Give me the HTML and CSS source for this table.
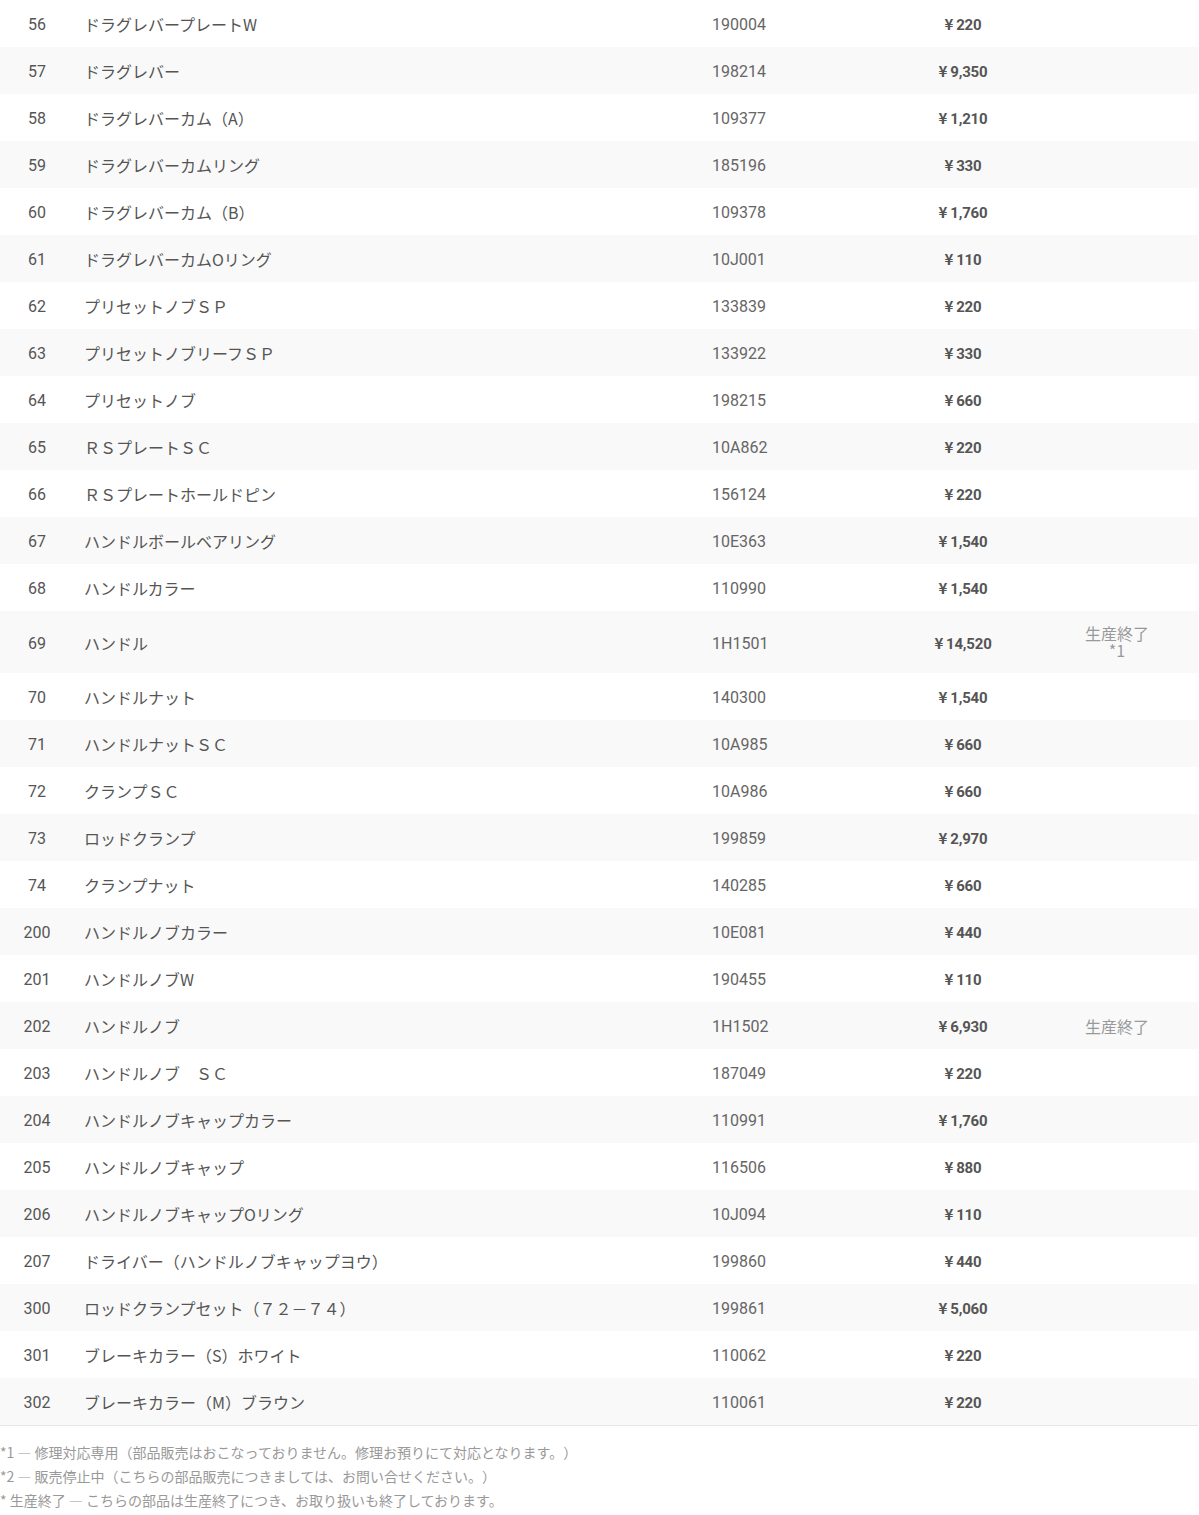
FILE: index.html
```html
<!DOCTYPE html>
<html lang="ja">
<head>
<meta charset="utf-8">
<title>Parts</title>
<link rel="stylesheet" href="styles.css">
</head>
<body>
<table class="parts">
<colgroup><col class="c-no"><col class="c-name"><col class="c-code"><col class="c-price"><col class="c-note"></colgroup>
<tbody>
<tr><td class="no">56</td><td class="name">ドラグレバープレートW</td><td class="code">190004</td><td class="price"><span class="yen">¥</span>220</td><td class="note"></td></tr>
<tr><td class="no">57</td><td class="name">ドラグレバー</td><td class="code">198214</td><td class="price"><span class="yen">¥</span>9,350</td><td class="note"></td></tr>
<tr><td class="no">58</td><td class="name">ドラグレバーカム（A）</td><td class="code">109377</td><td class="price"><span class="yen">¥</span>1,210</td><td class="note"></td></tr>
<tr><td class="no">59</td><td class="name">ドラグレバーカムリング</td><td class="code">185196</td><td class="price"><span class="yen">¥</span>330</td><td class="note"></td></tr>
<tr><td class="no">60</td><td class="name">ドラグレバーカム（B）</td><td class="code">109378</td><td class="price"><span class="yen">¥</span>1,760</td><td class="note"></td></tr>
<tr><td class="no">61</td><td class="name">ドラグレバーカムOリング</td><td class="code">10J001</td><td class="price"><span class="yen">¥</span>110</td><td class="note"></td></tr>
<tr><td class="no">62</td><td class="name">プリセットノブＳＰ</td><td class="code">133839</td><td class="price"><span class="yen">¥</span>220</td><td class="note"></td></tr>
<tr><td class="no">63</td><td class="name">プリセットノブリーフＳＰ</td><td class="code">133922</td><td class="price"><span class="yen">¥</span>330</td><td class="note"></td></tr>
<tr><td class="no">64</td><td class="name">プリセットノブ</td><td class="code">198215</td><td class="price"><span class="yen">¥</span>660</td><td class="note"></td></tr>
<tr><td class="no">65</td><td class="name">ＲＳプレートＳＣ</td><td class="code">10A862</td><td class="price"><span class="yen">¥</span>220</td><td class="note"></td></tr>
<tr><td class="no">66</td><td class="name">ＲＳプレートホールドピン</td><td class="code">156124</td><td class="price"><span class="yen">¥</span>220</td><td class="note"></td></tr>
<tr><td class="no">67</td><td class="name">ハンドルボールベアリング</td><td class="code">10E363</td><td class="price"><span class="yen">¥</span>1,540</td><td class="note"></td></tr>
<tr><td class="no">68</td><td class="name">ハンドルカラー</td><td class="code">110990</td><td class="price"><span class="yen">¥</span>1,540</td><td class="note"></td></tr>
<tr><td class="no">69</td><td class="name">ハンドル</td><td class="code">1H1501</td><td class="price"><span class="yen">¥</span>14,520</td><td class="note"><span class="note-text">生産終了<br>*1</span></td></tr>
<tr><td class="no">70</td><td class="name">ハンドルナット</td><td class="code">140300</td><td class="price"><span class="yen">¥</span>1,540</td><td class="note"></td></tr>
<tr><td class="no">71</td><td class="name">ハンドルナットＳＣ</td><td class="code">10A985</td><td class="price"><span class="yen">¥</span>660</td><td class="note"></td></tr>
<tr><td class="no">72</td><td class="name">クランプＳＣ</td><td class="code">10A986</td><td class="price"><span class="yen">¥</span>660</td><td class="note"></td></tr>
<tr><td class="no">73</td><td class="name">ロッドクランプ</td><td class="code">199859</td><td class="price"><span class="yen">¥</span>2,970</td><td class="note"></td></tr>
<tr><td class="no">74</td><td class="name">クランプナット</td><td class="code">140285</td><td class="price"><span class="yen">¥</span>660</td><td class="note"></td></tr>
<tr><td class="no">200</td><td class="name">ハンドルノブカラー</td><td class="code">10E081</td><td class="price"><span class="yen">¥</span>440</td><td class="note"></td></tr>
<tr><td class="no">201</td><td class="name">ハンドルノブW</td><td class="code">190455</td><td class="price"><span class="yen">¥</span>110</td><td class="note"></td></tr>
<tr><td class="no">202</td><td class="name">ハンドルノブ</td><td class="code">1H1502</td><td class="price"><span class="yen">¥</span>6,930</td><td class="note"><span class="note-text">生産終了</span></td></tr>
<tr><td class="no">203</td><td class="name">ハンドルノブ　ＳＣ</td><td class="code">187049</td><td class="price"><span class="yen">¥</span>220</td><td class="note"></td></tr>
<tr><td class="no">204</td><td class="name">ハンドルノブキャップカラー</td><td class="code">110991</td><td class="price"><span class="yen">¥</span>1,760</td><td class="note"></td></tr>
<tr><td class="no">205</td><td class="name">ハンドルノブキャップ</td><td class="code">116506</td><td class="price"><span class="yen">¥</span>880</td><td class="note"></td></tr>
<tr><td class="no">206</td><td class="name">ハンドルノブキャップOリング</td><td class="code">10J094</td><td class="price"><span class="yen">¥</span>110</td><td class="note"></td></tr>
<tr><td class="no">207</td><td class="name">ドライバー（ハンドルノブキャップヨウ）</td><td class="code">199860</td><td class="price"><span class="yen">¥</span>440</td><td class="note"></td></tr>
<tr><td class="no">300</td><td class="name">ロッドクランプセット（７２－７４）</td><td class="code">199861</td><td class="price"><span class="yen">¥</span>5,060</td><td class="note"></td></tr>
<tr><td class="no">301</td><td class="name">ブレーキカラー（S）ホワイト</td><td class="code">110062</td><td class="price"><span class="yen">¥</span>220</td><td class="note"></td></tr>
<tr><td class="no">302</td><td class="name">ブレーキカラー（M）ブラウン</td><td class="code">110061</td><td class="price"><span class="yen">¥</span>220</td><td class="note"></td></tr>
</tbody>
</table>
<ul class="footnotes">
<li>*1 — 修理対応専用（部品販売はおこなっておりません。修理お預りにて対応となります。）</li>
<li>*2 — 販売停止中（こちらの部品販売につきましては、お問い合せください。）</li>
<li>* 生産終了 — こちらの部品は生産終了につき、お取り扱いも終了しております。</li>
</ul>
</body>
</html>
```
FILE: styles.css
```css
html, body {
  margin: 0;
  padding: 0;
  background: #fff;
}
body {
  font-family: Roboto, "Noto Sans CJK JP", sans-serif;
  color: #555;
  font-size: 16px;
}
.parts {
  width: 1198px;
  border-collapse: collapse;
  table-layout: fixed;
  border-bottom: 1px solid #e6e6e6;
}
.c-no { width: 74px; }
.c-name { width: 628px; }
.c-code { width: 188px; }
.c-price { width: 146px; }
.c-note { width: 162px; }
.parts tr:nth-child(even) td { background: #f9f9f9; }
.parts td {
  height: 17px;
  padding: 16px 10px 14px;
  line-height: 17px;
  vertical-align: middle;
  white-space: nowrap;
}
.no {
  text-align: center;
  font-family: Roboto, sans-serif;
}
.name {
  font-family: "Noto Sans CJK JP", sans-serif;
  text-spacing-trim: space-all;
}
.code {
  font-family: Roboto, sans-serif;
  color: #666;
}
.parts td.price {
  text-align: center;
  font-weight: 700;
  font-size: 15px;
  line-height: 12px;
  letter-spacing: -0.2px;
  font-family: Roboto, sans-serif;
  color: #555;
}
.yen {
  font-family: "Noto Sans CJK JP", sans-serif;
  font-size: 15px;
  line-height: 12px;
  margin-right: 3px;
}
.note {
  text-align: center;
  color: #999;
  font-family: "Noto Sans CJK JP", sans-serif;
}
.note-text {
  display: inline-block;
  line-height: 17px;
  margin: -2px 0 -1px;
}
.footnotes {
  list-style: none;
  margin: 14px 0 0;
  padding: 0;
  font-family: "Noto Sans CJK JP", sans-serif;
  font-size: 14px;
  line-height: 24px;
  color: #999;
  text-spacing-trim: space-all;
}
```
